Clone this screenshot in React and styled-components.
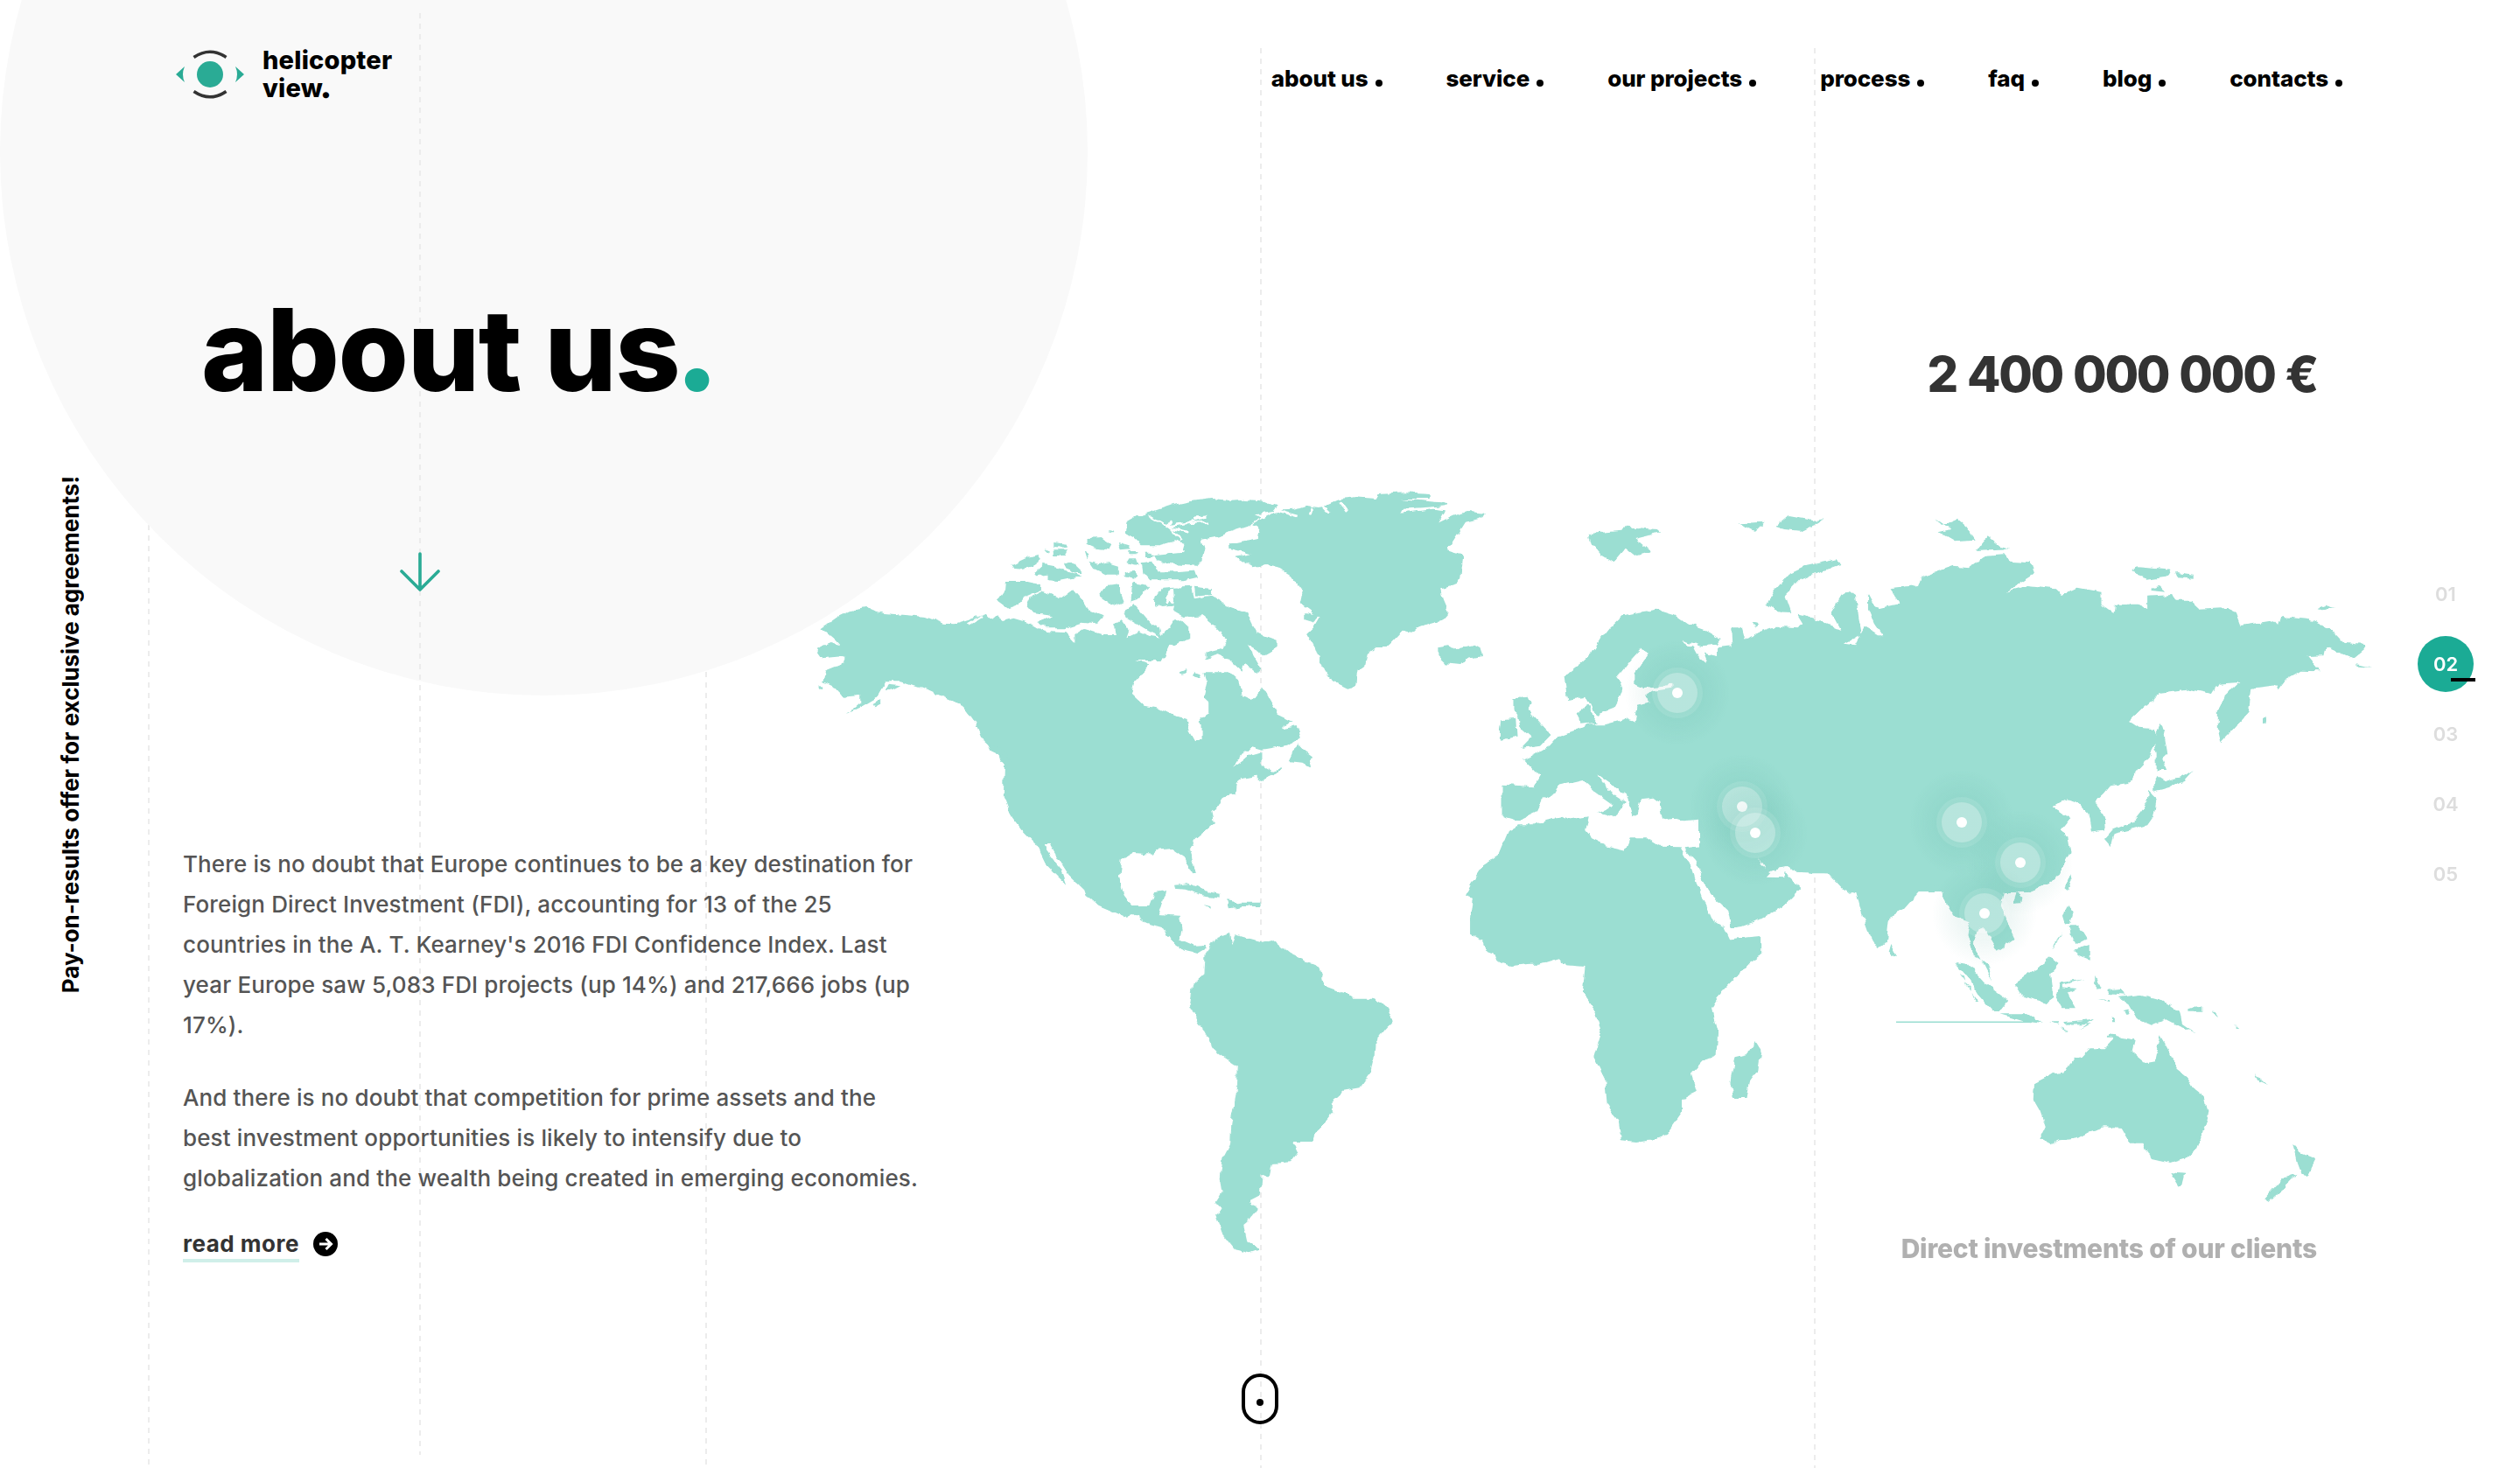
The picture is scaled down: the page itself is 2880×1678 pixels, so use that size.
import React from "react";
import styled, { createGlobalStyle } from "styled-components";

const GlobalStyle = createGlobalStyle`
  html, body { margin: 0; padding: 0; background: #fff; }
  body { font-family: Inter, "Liberation Sans", sans-serif; }
  * { box-sizing: border-box; }
`;

const TEAL = "#1bab95";
const LAND = "#9bded2";

const Page = styled.div`
  position: relative;
  width: 2880px;
  height: 1678px;
  overflow: hidden;
  background: #fff;
  color: #000;
`;
const Disc = styled.div`
  position: absolute;
  left: 0;
  top: -448px;
  width: 1243px;
  height: 1243px;
  border-radius: 50%;
  background: #f9f9f9;
  z-index: ${(p) => p.$z};
`;
const GuideLine = styled.i`
  position: absolute;
  z-index: ${(p) => p.$z || 0};
  left: ${(p) => p.$x}px;
  top: ${(p) => p.$from}px;
  height: ${(p) => p.$to - p.$from}px;
  width: 2px;
  background: repeating-linear-gradient(to bottom, #ececec 0 6px, transparent 6px 12px);
`;
const Layer = styled.div`
  position: relative;
  z-index: 2;
`;
const Header = styled.header`
  display: flex;
  justify-content: space-between;
  height: 120px;
  padding: 55px 203px 0 200px;
`;
const Logo = styled.a`
  display: flex;
  gap: 18px;
  align-items: flex-start;
`;
const LogoText = styled.span`
  font-size: 29px;
  line-height: 32px;
  font-weight: 800;
  letter-spacing: 0.2px;
  margin-top: -2px;
`;
const LogoLine = styled.span`
  display: block;
  height: 32px;
  overflow: visible;
`;
const Period = styled.span`
  font-family: Lato, sans-serif;
  font-weight: 900;
  font-size: ${(p) => p.$size || 1}em;
  line-height: 0;
  letter-spacing: 0;
  color: ${(p) => p.$color || "inherit"};
  -webkit-text-stroke: ${(p) => p.$stroke || 0}px currentColor;
`;
const Nav = styled.nav`
  display: flex;
  gap: 73px;
  padding-top: 20px;
`;
const NavItem = styled.a`
  display: flex;
  align-items: baseline;
  gap: 8px;
  font-size: 26px;
  line-height: 30px;
  font-weight: 800;
  letter-spacing: -0.1px;
  &::after {
    content: "";
    width: 8px;
    height: 8px;
    border-radius: 50%;
    background: #000;
  }
`;
const Main = styled.main`
  display: grid;
  grid-template-columns: 930px 1833px 64px;
  height: 1432px;
`;
const LeftColumn = styled.section`
  display: flex;
  align-items: flex-start;
`;
const Rail = styled.div`
  writing-mode: vertical-rl;
  transform: rotate(180deg);
  margin: 424px 0 0 67px;
  width: 28px;
  font-size: 26px;
  line-height: 28px;
  font-weight: 700;
  letter-spacing: -0.03px;
  white-space: nowrap;
`;
const Story = styled.div`
  margin-left: 114px;
  white-space: nowrap;
`;
const Title = styled.h1`
  margin: 215px 0 0 21px;
  font-size: 130px;
  line-height: 130px;
  font-weight: 800;
  letter-spacing: -1.4px;
`;
const DownArrow = styled.svg`
  display: block;
  margin: 166px 0 0 248px;
`;
const Paragraph = styled.p`
  margin: 0 0 37px;
  font-size: 26px;
  line-height: 46px;
  font-weight: 500;
  letter-spacing: 0.13px;
  color: #555;
`;
const Article = styled.div`
  margin-top: 288px;
`;
const ReadMore = styled.a`
  display: flex;
  align-items: center;
  gap: 16px;
  margin-top: 10px;
  color: #333;
  font-size: 26px;
  font-weight: 700;
  line-height: 30px;
`;
const ReadLabel = styled.span`
  display: block;
  box-shadow: 0 2px 0 0 #fff, 0 6px 0 0 #d0efe9;
  letter-spacing: 0.5px;
`;
const MapColumn = styled.section`
  display: flex;
  flex-direction: column;
`;
const Amount = styled.div`
  margin: 273px 115px 0 0;
  text-align: right;
  font-size: 56px;
  line-height: 70px;
  font-weight: 800;
  letter-spacing: -2.3px;
  word-spacing: 2px;
  color: #333;
`;
const WorldMap = styled.svg`
  display: block;
  margin-top: 87px;
  flex: none;
`;
const Land = styled.polygon`
  fill: ${LAND};
`;
const Cut = styled.polyline`
  fill: none;
  stroke: #fff;
  vector-effect: non-scaling-stroke;
  stroke-width: 2.5px;
`;
const Caption = styled.div`
  margin: -41px 115px 0 0;
  text-align: right;
  font-size: 30px;
  line-height: 36px;
  font-weight: 800;
  letter-spacing: -0.2px;
  color: #b0b0b0;
`;
const Steps = styled.ol`
  display: flex;
  flex-direction: column;
  gap: 16px;
  list-style: none;
  margin: 527px 0 0;
  padding: 0;
`;
const Step = styled.li`
  position: relative;
  width: 64px;
  height: 64px;
  display: flex;
  align-items: center;
  justify-content: center;
  border-radius: 50%;
  font-size: 22px;
  font-weight: 600;
  color: ${(p) => (p.$active ? "#fff" : "#ddd")};
  background: ${(p) => (p.$active ? TEAL : "transparent")};
  &::after {
    content: "";
    display: ${(p) => (p.$active ? "block" : "none")};
    position: absolute;
    left: 38px;
    top: 48px;
    width: 28px;
    height: 4px;
    background: #000;
  }
`;
const ScrollRow = styled.div`
  display: flex;
  justify-content: center;
  margin-top: 18px;
`;
const ScrollHint = styled.div`
  position: relative;
  width: 42px;
  height: 58px;
  border: 4px solid #000;
  border-radius: 21px;
  &::after {
    content: "";
    position: absolute;
    left: 13px;
    top: 25px;
    width: 8px;
    height: 8px;
    border-radius: 50%;
    background: #000;
  }
`;

/* ---------- tracing frames: one per region of the map ---------- */
const F3 = "translate(900 540) scale(0.57405 0.33333)";
const F5 = "translate(900 960) scale(0.57405 0.33333)";
const F4 = "translate(1700 540) scale(0.70151 0.33333)";
const F6 = "translate(1700 960) scale(0.63776 0.33333)";

const americas = [
  "67,535 100,495 125,475 155,465 190,482 240,490 275,495 310,518 330,520 360,505 395,485 405,505 415,490 430,510 450,500 480,515 510,545 555,550 572,582 572,555 590,537 625,555 655,555 650,525 665,505 680,540 675,565 700,545 720,560 740,565 760,530 770,505 785,505 800,530 800,570 770,595 762,590 750,635 722,603 752,620 745,645 692,645 722,658 690,720 685,760 710,800 740,810 770,835 795,845 800,885 812,922 825,915 825,860 818,850 840,825 840,790 828,770 835,720 830,685 875,685 900,715 905,765 925,780 945,735 970,810 975,830 1005,855 985,870 985,880 1015,870 1022,905 995,935 945,950 925,940 905,965 887,1010 915,975 945,960 945,1005 965,1025 985,1010 975,1030 935,1060 935,1040 905,1050 895,1065 893,1105 865,1115 850,1165 845,1160 850,1200 815,1250 800,1295 815,1370 805,1375 790,1320 765,1290 735,1295 725,1310 690,1305 665,1330 660,1390 670,1450 685,1485 720,1485 730,1440 755,1435 740,1515 780,1520 785,1570 780,1600 810,1622 830,1620 835,1630 815,1650 790,1640 765,1610 745,1560 715,1545 690,1515 670,1522 620,1485 595,1455 590,1430 560,1380 530,1300 522,1272 512,1272 515,1295 530,1330 545,1360 556,1415 535,1380 515,1345 497,1280 465,1225 445,1180 430,1110 432,1000 415,960 390,920 375,860 350,800 315,775 270,740 225,715 195,715 175,775 150,800 120,825 80,858 120,825 145,790 145,765 110,770 95,740 70,720 75,680 112,655 112,630 70,637 57,605 85,585 105,595 95,575",
  "432,372 470,372 505,385 505,405 470,430 460,455 440,468 418,440 430,410",
  "480,430 510,405 545,430 570,400 590,440 600,470 630,490 615,520 585,515 550,535 515,535 495,510 530,490 490,480 475,450",
  "635,390 660,385 665,420 670,445 650,460 620,425",
  "685,380 720,390 700,430 682,440",
  "730,430 745,395 768,392 755,425 770,460 745,465 730,455",
  "768,395 805,392 810,435 845,425 880,460 915,480 925,520 935,550 975,575 975,600 950,625 915,590 945,680 935,690 910,655 905,680 880,640 860,625 830,640 830,620 865,605 875,570 850,525 825,490 790,495 765,470 770,440",
  "810,392 845,400 845,420 812,425",
  "810,685 825,690 820,705 808,700",
  "780,685 795,675 795,688 785,692",
  "670,470 690,450 705,480 725,520 740,530 745,565 720,545 695,520 675,500",
  "715,140 760,115 800,100 845,90 880,95 910,92 950,98 975,115 965,135 930,145 945,155 915,185 880,205 860,220 825,230 830,260 825,300 815,320 760,315 735,300 730,285 760,280 785,275 790,245 770,235 740,250 705,250 690,225 672,210 675,170 695,150",
  "595,225 625,222 645,250 640,265 615,260 595,245",
  "660,240 680,250 685,262 665,265",
  "530,240 555,245 555,258 530,255",
  "530,265 555,265 550,285 532,285",
  "445,315 470,295 500,282 505,300 485,325 470,332 450,330",
  "490,345 510,315 540,325 555,340 590,355 540,372 520,370 520,350 495,355",
  "550,315 565,305 590,345 570,345",
  "600,305 620,315 640,310 660,320 660,350 635,350 610,330",
  "680,295 695,295 700,320 675,310",
  "705,310 725,305 735,340 770,340 810,335 815,360 790,370 720,370 708,345",
  "672,345 688,338 698,355 688,368 672,360",
  "680,270 700,270 695,280 680,280",
  "710,275 725,275 730,288 712,288",
  "640,195 650,200 650,205 640,205",
  "590,268 600,280 595,295",
  "510,262 520,268 520,278",
  "925,180 965,140 985,130 1010,128 1035,115 1060,120 1100,90 1130,85 1170,90 1175,75 1230,70 1280,75 1280,90 1220,90 1315,105 1310,115 1225,125 1220,140 1285,125 1310,130 1295,175 1325,150 1350,135 1390,140 1385,155 1350,170 1330,225 1315,265 1335,275 1345,295 1340,360 1330,385 1300,400 1305,440 1315,480 1300,510 1280,520 1235,550 1225,545 1195,600 1170,600 1155,620 1150,660 1135,680 1130,735 1115,740 1085,715 1060,650 1050,600 1035,555 1050,530 1060,500 1020,450 1025,410 1000,350 980,330 955,318 925,325 890,290 925,280 880,260 880,245 935,225 940,195",
  "1295,600 1315,595 1325,605 1345,600 1370,590 1380,600 1385,630 1350,640 1340,660 1310,655 1295,630",
  "1445,775 1475,770 1480,790 1475,815 1500,860 1520,900 1500,935 1460,945 1480,910 1460,880 1455,840 1445,810",
  "1420,850 1450,845 1452,905 1418,918 1418,880",
  "1018,925 1025,950 1045,975 1040,1010 1025,995 998,990 1005,965",
  "62,733 70,733 70,743 62,743",
  "398,930 425,945 445,990 430,975 405,955",
  "195,750 200,725 225,730 205,748",
  "170,795 185,780 185,800 175,808",
  "1030,480 1060,490 1050,515 1030,505"
];
const americaCuts = [
  "720,150 760,190 800,205",
  "765,160 755,185 790,175 838,170",
  "810,155 835,152 790,175",
  "360,520 385,495",
  "775,262 790,270",
  "975,130 1015,150",
  "1045,120 1040,145",
  "1065,115 1080,140",
  "1100,100 1115,135",
  "760,190 785,235",
  "765,400 755,450"
];
const south = [
  "770,155 800,150 830,175 860,185 860,197 825,190 790,170 772,168",
  "875,208 900,215 940,215 940,228 905,228 878,235",
  "828,222 842,228 843,236",
  "832,390 855,335 882,320 885,365 892,325 945,350 965,342 1000,390 1025,410 1060,435 1068,500 1115,530 1125,545 1165,545 1195,575 1205,615 1170,690 1168,745 1160,800 1140,850 1105,860 1085,890 1085,935 1060,985 1045,1035 1005,1035 1015,1070 1000,1105 965,1110 960,1150 945,1150 942,1220 920,1240 935,1265 915,1310 908,1320 915,1375 940,1405 920,1417 890,1405 865,1350 852,1285 865,1270 852,1245 865,1210 860,1160 865,1090 880,1040 882,970 893,870 895,775 860,735 845,710 830,660 812,605 800,560 805,500 830,460"
];
const eurasia = [
  "25,1070 75,1078 85,1040 60,985 75,970 100,940 115,905 150,878 165,865 190,865 225,845 240,855 245,800 265,790 255,770 270,750 300,740 300,728 255,738 240,725 240,690 265,620 250,605 235,640 212,700 220,740 215,770 205,810 180,830 170,815 160,770 130,780 125,700 150,660 170,620 185,570 200,530 220,490 245,480 275,470 305,490 325,520 360,545 380,570 375,590 350,595 318,575 335,600 345,640 358,650 352,620 375,630 375,600 400,595 398,535 415,535 420,575 435,555 470,530 505,535 515,520 505,485 540,510 575,540 560,480 575,425 590,405 600,420 605,500 610,555 580,590 598,595 615,530 645,565 630,520 620,470 620,420 630,460 640,465 672,450 655,400 700,390 705,360 760,320 785,325 810,285 840,280 850,305 885,310 890,350 845,410 880,390 925,400 935,420 960,395 1000,410 1000,450 1020,480 1022,455 1060,455 1075,465 1075,425 1115,420 1120,440 1145,440 1160,470 1205,465 1220,480 1228,525 1280,508 1290,530 1295,495 1340,505 1375,540 1395,585 1425,590 1432,600 1410,638 1365,598 1362,628 1335,630 1355,682 1325,680 1300,710 1288,745 1285,730 1245,740 1240,820 1215,880 1195,925 1190,880 1190,810 1200,770 1240,690 1253,680 1225,720 1190,725 1180,760 1145,745 1095,758 1070,805 1045,855 1060,875 1088,880 1088,915 1080,975 1060,1020 1045,1065 1015,1075 1005,1100 990,1130 1003,1180 1005,1225 985,1232 980,1170 965,1135 945,1120 920,1150 950,1185 935,1225 950,1300 935,1360 915,1410 880,1440 600,1440 580,1430 555,1375 500,1370 490,1350 445,1340 433,1295 345,1285 345,1190 320,1195 300,1185 285,1190 280,1130 270,1115 250,1120 245,1170 235,1180 225,1105 205,1075 178,1035 195,1090 225,1130 215,1160 205,1180 180,1165 205,1140 175,1095 155,1055 115,1075 110,1100 90,1120 80,1165 50,1195 25,1180",
  "148,820 162,800 180,860 150,866",
  "22,1290 34,1230 50,1210 75,1210 95,1190 120,1180 130,1190 165,1180 160,1230 170,1255 195,1280 225,1295 232,1255 260,1255 280,1280 315,1282 314,1290 332,1350 341,1410 350,1460 364,1530 386,1560 395,1600 445,1590 445,1655 427,1680 382,1780 365,1840 375,1920 373,2000 350,2020 332,2060 341,2125 318,2150 318,2190 291,2270 273,2285 241,2295 218,2290 214,2230 195,2170 191,2080 173,2005 186,1915 177,1860 168,1820 155,1780 159,1695 127,1690 118,1665 86,1685 68,1685 41,1692 18,1680 14,1655 0,1645 -3,1635 -7,1605 -27,1580 -27,1530 -23,1460 -36,1450 -27,1410 -7,1345 18,1310",
  "455,450 470,400 490,350 520,320 570,298 575,315 510,365 485,420 495,480 470,478",
  "165,210 220,200 225,185 275,195 280,205 240,225 265,270 240,285 225,260 205,310 185,285 170,250",
  "410,175 450,170 435,200 425,195",
  "470,185 490,150 530,165 550,160 530,180 510,200 485,195",
  "728,155 740,180 765,158 780,185 795,230 760,235 735,205 755,195",
  "800,260 815,220 835,255 850,265 795,270",
  "1048,335 1060,325 1115,335 1110,355 1075,365 1060,355",
  "1122,342 1150,350 1150,362 1125,358",
  "1080,400 1095,390 1105,410 1080,405",
  "1352,465 1365,455 1380,465 1360,472",
  "1418,658 1440,668 1420,665",
  "1263,840 1268,840 1270,860 1263,860",
  "430,515 443,520 435,532",
  "1097,860 1103,900 1108,965 1098,985 1105,1020 1090,1020 1090,960 1085,915",
  "1090,1040 1105,1060 1135,1040 1150,1020 1135,1055 1110,1080 1085,1095 1085,1060",
  "1078,1095 1090,1120 1085,1180 1075,1210 1050,1225 1020,1240 1015,1285 1005,1260 1020,1225 1050,1200 1065,1160 1075,1130",
  "950,1378 952,1400 945,1428 940,1420"
];
const eastern = [
  "478,-15 1040,-15 1045,45 1025,120 990,160 960,175 925,180 920,225 935,300 945,340 915,380 890,300 880,305 870,350 885,410 905,485 895,425 870,390 860,320 865,280 835,260 825,230 808,155 775,175 745,240 720,265 715,350 700,375 685,330 670,250 660,175 645,180 630,150 612,115 585,115 535,90 510,100 500,110 478,35",
  "382,-30 382,22 352,28 372,70 385,130 400,185 430,240 437,300 450,300 480,280 510,250 530,230 550,190 562,165 540,125 532,105 532,130 500,128 508,112 490,90 478,30 478,-30",
  "480,690 490,720 485,790 470,830 465,885 440,885 435,830 443,745 465,735",
  "722,360 732,400 722,405 718,385",
  "950,178 957,195 955,220 942,222",
  "1040,225 1050,250 1045,285 1035,290 1030,260",
  "1040,295 1060,295 1075,340 1055,360 1045,320",
  "1050,380 1080,360 1080,410 1060,395",
  "1030,320 1010,370 1020,355",
  "1008,400 1025,425 1010,460 1015,540 1000,560 960,540 945,490 965,465 1000,420",
  "838,420 860,425 890,490 925,540 930,555 918,585 905,585 880,530 860,470",
  "845,460 852,465 855,485",
  "855,490 865,505 865,515",
  "868,525 880,555 875,555",
  "918,598 970,598 995,630 960,622",
  "1025,490 1070,478 1030,497 1030,505 1055,510 1040,525 1055,580 1030,580 1020,545",
  "1090,470 1100,510 1090,512",
  "1110,515 1135,510 1140,530 1115,525",
  "1095,545 1115,550 1115,555",
  "1130,540 1170,530 1210,550 1240,590 1245,630 1268,660 1240,640 1215,615 1190,635 1165,615 1150,565",
  "1255,580 1280,565 1280,590 1255,590",
  "1300,585 1308,605 1302,600",
  "1340,640 1346,648 1340,648",
  "1005,625 1025,625 1022,632",
  "1030,625 1085,615 1060,650 1080,630 1035,632",
  "1025,640 1040,655 1030,652",
  "1118,610 1125,625 1118,625",
  "1110,675 1125,665 1135,680 1110,680",
  "1140,585 1150,580 1145,600",
  "980,835 1010,805 1035,800 1050,750 1065,745 1080,715 1105,715 1125,675 1160,685 1155,725 1180,765 1195,760 1205,670 1220,720 1235,785 1255,815 1265,850 1285,880 1292,945 1280,1010 1270,1060 1250,1095 1225,1110 1190,1095 1175,1040 1150,1040 1135,990 1105,985 1080,1000 1055,1025 1025,1030 1010,1045 990,1025 1000,985 990,930 978,890",
  "1222,1140 1250,1145 1245,1185 1238,1190",
  "1443,1040 1458,1075 1485,1095 1470,1150 1458,1145 1450,1105",
  "1450,1145 1430,1190 1400,1240 1392,1230 1425,1160",
  "1375,805 1397,840 1380,825"
];

const spots = [
  [1917, 792],
  [1991, 922],
  [2006, 952],
  [2242, 940],
  [2309, 986],
  [2268, 1044]
];

const MapDrawing = () => (
  <WorldMap width="1833" height="900" viewBox="930 550 1833 900" aria-hidden="true">
    <defs>
      <radialGradient id="halo">
        <stop offset="40%" stopColor="#3f9e8d" stopOpacity="0.1" />
        <stop offset="100%" stopColor="#3f9e8d" stopOpacity="0" />
      </radialGradient>
      <filter id="coast" filterUnits="userSpaceOnUse" x="900" y="520" width="1860" height="940">
        <feTurbulence type="fractalNoise" baseFrequency="0.09" numOctaves="2" seed="4" />
        <feDisplacementMap in="SourceGraphic" scale="7" xChannelSelector="R" yChannelSelector="G" />
      </filter>
    </defs>
    <g filter="url(#coast)">
      <g transform={F3}>
        {americas.map((p, i) => <Land key={i} points={p} />)}
        {americaCuts.map((p, i) => <Cut key={i} points={p} />)}
      </g>
      <g transform={F5}>{south.map((p, i) => <Land key={i} points={p} />)}</g>
      <g transform={F4}>{eurasia.map((p, i) => <Land key={i} points={p} />)}</g>
      <g transform={F6}>{eastern.map((p, i) => <Land key={i} points={p} />)}</g>
    </g>
    <rect x="2167" y="1167.5" width="155" height="1.6" fill={LAND} />
    {spots.map(([x, y]) => (
      <g key={x}>
        <circle cx={x} cy={y} r="60" fill="url(#halo)" />
        <circle cx={x} cy={y} r="29" fill="#fff" fillOpacity="0.1" />
        <circle cx={x} cy={y} r="23" fill="#fff" fillOpacity="0.28" />
        <circle cx={x} cy={y} r="6" fill="#fff" />
      </g>
    ))}
  </WorldMap>
);

const LogoMark = () => (
  <svg width="82" height="60" viewBox="200 55 82 60" aria-hidden="true">
    <circle cx="240" cy="85" r="15" fill="#2aab95" />
    <path d="M221.5 65.5 Q240 53 258.5 65.5" fill="none" stroke="#333" strokeWidth="3.6" />
    <path d="M221.5 104.5 Q240 117 258.5 104.5" fill="none" stroke="#333" strokeWidth="3.6" />
    <path d="M211 76 L201 85 L211 94 Q207 85 211 76Z" fill="#2aab95" />
    <path d="M269 76 L279 85 L269 94 Q273 85 269 76Z" fill="#2aab95" />
  </svg>
);

const navItems = ["about us", "service", "our projects", "process", "faq", "blog", "contacts"];
const guides = [
  [169, 0, 1678],
  [806, 0, 1678],
  [1440, 55, 1678],
  [2073, 55, 1678]
];

export default function App() {
  return (
    <Page>
      <GlobalStyle />
      {guides.map(([x, a, b]) => <GuideLine key={x} $x={x} $from={a} $to={b} />)}
      <Disc $z={0} />
      <GuideLine $x={479} $from={15} $to={1663} $z={1} />
      <Layer>
        <Header>
          <Logo>
            <LogoMark />
            <LogoText>
              <LogoLine>helicopter</LogoLine>
              <LogoLine>view<Period $stroke={2.5}>.</Period></LogoLine>
            </LogoText>
          </Logo>
          <Nav>
            {navItems.map((n) => <NavItem key={n}>{n}</NavItem>)}
          </Nav>
        </Header>
        <Main>
          <LeftColumn>
            <Rail>Pay-on-results offer for exclusive agreements!</Rail>
            <Story>
              <Title>about us<Period $color={TEAL} $size={1.3}>.</Period></Title>
              <DownArrow width="46" height="46" viewBox="0 0 46 46" fill="none" stroke="#2aab95" strokeWidth="3.6" strokeLinecap="round" strokeLinejoin="round">
                <path d="M23 2 V43 M2 22 L23 43 L44 22" />
              </DownArrow>
              <Article>
                <Paragraph>
                  There is no doubt that Europe continues to be a key destination for<br />
                  Foreign Direct Investment (FDI), accounting for 13 of the 25<br />
                  countries in the A. T. Kearney's 2016 FDI Confidence Index. Last<br />
                  year Europe saw 5,083 FDI projects (up 14%) and 217,666 jobs (up<br />
                  17%).
                </Paragraph>
                <Paragraph>
                  And there is no doubt that competition for prime assets and the<br />
                  best investment opportunities is likely to intensify due to<br />
                  globalization and the wealth being created in emerging economies.
                </Paragraph>
                <ReadMore>
                  <ReadLabel>read more</ReadLabel>
                  <svg width="28" height="28" viewBox="0 0 28 28" aria-hidden="true">
                    <circle cx="14" cy="14" r="14" fill="#000" />
                    <path d="M7 14 H20 M14.5 8 L20.5 14 L14.5 20" fill="none" stroke="#fff" strokeWidth="3" />
                  </svg>
                </ReadMore>
              </Article>
            </Story>
          </LeftColumn>
          <MapColumn>
            <Amount>2 400 000 000 €</Amount>
            <MapDrawing />
            <Caption>Direct investments of our clients</Caption>
          </MapColumn>
          <Steps>
            {["01", "02", "03", "04", "05"].map((s) => (
              <Step key={s} $active={s === "02"}>{s}</Step>
            ))}
          </Steps>
        </Main>
        <ScrollRow>
          <ScrollHint />
        </ScrollRow>
      </Layer>
    </Page>
  );
}
